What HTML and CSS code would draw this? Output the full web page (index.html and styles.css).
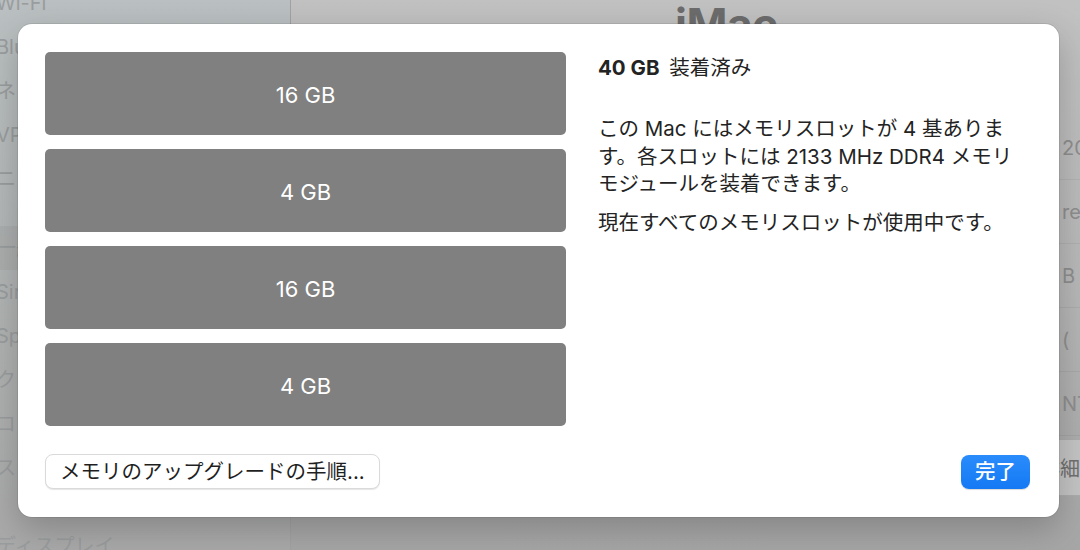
FILE: index.html
```html
<!DOCTYPE html>
<html lang="ja">
<head>
<meta charset="utf-8">
<title>メモリ</title>
<link rel="stylesheet" href="styles.css">
</head>
<body>
<div class="window">
  <aside class="sidebar">
    <ul class="side-list">
      <li>Wi-Fi</li>
      <li>Bluetooth</li>
      <li>ネットワーク</li>
      <li>VPN</li>
      <li>ニュース</li>
      <li class="section selected">一般</li>
      <li>Siri</li>
      <li>Spotlight</li>
      <li>クラウド</li>
      <li>コントロールセンター</li>
      <li>スクリーンセーバ</li>
      <li class="section last">ディスプレイ</li>
    </ul>
  </aside>
  <main class="content">
    <h1 class="model">iMac</h1>
    <div class="info-rows">
      <div class="info-row"><span class="val">2020</span></div>
      <div class="info-row"><span class="val">retina</span></div>
      <div class="info-row"><span class="val">B cx</span></div>
      <div class="info-row"><span class="val">(</span></div>
      <div class="info-row"><span class="val">NT</span></div>
      <div class="info-row btn-row"><span class="val ghost-btn">詳細...</span></div>
    </div>
  </main>
</div>

<div class="sheet">
  <div class="sheet-body">
    <div class="slots">
      <div class="slot">16 GB</div>
      <div class="slot">4 GB</div>
      <div class="slot">16 GB</div>
      <div class="slot">4 GB</div>
    </div>
    <div class="details">
      <h2 class="installed"><b>40 GB</b> <span class="installed-label">装着済み</span></h2>
      <p class="desc">この Mac にはメモリスロットが 4 基ありま<br>す。各スロットには 2133 MHz DDR4 メモリ<br>モジュールを装着できます。</p>
      <p class="desc second">現在すべてのメモリスロットが使用中です。</p>
    </div>
  </div>
  <div class="sheet-footer">
    <button class="btn">メモリのアップグレードの手順...</button>
    <button class="btn primary">完了</button>
  </div>
</div>
</body>
</html>
```

FILE: styles.css
```css
html, body {
  margin: 0;
  padding: 0;
  width: 1080px;
  height: 550px;
  overflow: hidden;
}

body {
  font-family: "Inter", "Noto Sans CJK JP", sans-serif;
  background: #b4b4b4;
  position: relative;
}

/* background (dimmed) window */
.window {
  display: flex;
  width: 1080px;
  height: 550px;
}

.sidebar {
  width: 291px;
  flex: none;
  background: linear-gradient(180deg, #bac0c1 0%, #b3b6b6 45%, #a9a9a9 100%);
  border-right: 1px solid #a2a2a2;
  box-sizing: border-box;
  overflow: hidden;
}

.side-list {
  list-style: none;
  margin: -19px 0 0 -4px;
  padding: 0;
}

.side-list li {
  height: 44px;
  line-height: 44px;
  font-size: 20px;
  color: #9a9d9e;
  white-space: nowrap;
  padding-left: 0;
}

.side-list li.section {
  margin-top: 25px;
}

.side-list li.last {
  margin-top: 34px;
}

.side-list li.selected {
  background: rgba(0, 0, 0, 0.04);
}

.content {
  flex: 1;
  background: linear-gradient(180deg, #c1c1c1 0%, #b8b8b8 50%, #a6a6a6 100%);
  overflow: hidden;
  position: relative;
}

.model {
  margin: 2px 0 0;
  padding: 0 0 0 384px;
  font-size: 44px;
  font-weight: 700;
  line-height: 44px;
  color: #6c6c6c;
  letter-spacing: -0.5px;
}

.info-rows {
  margin-top: 70px;
  display: flex;
  flex-direction: column;
}

.info-row {
  height: 63px;
  display: flex;
  align-items: center;
  border-bottom: 1px solid rgba(0, 0, 0, 0.05);
  font-size: 20px;
  color: #8e8e8e;
  white-space: nowrap;
}

.info-row .val {
  margin-left: 771px;
}

.info-row.btn-row {
  border-bottom: none;
}

.info-row .ghost-btn {
  margin-left: 736px;
  background: #c4c4c4;
  border: 1px solid #acacac;
  border-radius: 7px;
  padding: 13px 12px;
  color: #707070;
}

/* sheet */
.sheet {
  position: absolute;
  left: 18px;
  top: 24px;
  width: 1041px;
  height: 493px;
  box-sizing: border-box;
  background: #ffffff;
  border-radius: 14px;
  box-shadow: 0 0 0 1px rgba(0, 0, 0, 0.08), 0 12px 34px rgba(0, 0, 0, 0.22);
  padding: 28px 29px 28px 27px;
  display: flex;
  flex-direction: column;
  justify-content: space-between;
}

.sheet-body {
  display: flex;
  gap: 32px;
}

.slots {
  width: 521px;
  flex: none;
  display: flex;
  flex-direction: column;
  gap: 14px;
}

.slot {
  height: 83px;
  box-sizing: border-box;
  padding-top: 3px;
  background: #808080;
  border-radius: 5px;
  display: flex;
  align-items: center;
  justify-content: center;
  color: #ffffff;
  font-size: 22px;
}

.details {
  flex: 1;
  color: #232323;
}

.installed {
  margin: 0;
  font-size: 20.5px;
  line-height: 32px;
  font-weight: 400;
}

.installed b {
  font-weight: 700;
}

.installed-label {
  margin-left: 4px;
}

.desc {
  margin: 31px 0 0;
  font-size: 20.5px;
  line-height: 27.5px;
  white-space: nowrap;
}

.desc.second {
  margin-top: 11px;
}

.sheet-footer {
  display: flex;
  justify-content: space-between;
  align-items: center;
}

.btn {
  font-family: inherit;
  font-size: 20.5px;
  height: 35px;
  line-height: 33px;
  padding: 0 14px;
  border-radius: 8px;
  background: #ffffff;
  color: #1f1f1f;
  border: 1px solid #dadada;
  box-shadow: 0 1px 1px rgba(0, 0, 0, 0.1);
  margin: 0;
}

.btn.primary {
  width: 69px;
  padding: 0;
  height: 34px;
  color: #ffffff;
  font-weight: 500;
  border: none;
  background: linear-gradient(180deg, #2a8cfb 0%, #1479f4 100%);
  box-shadow: 0 1px 1px rgba(0, 0, 0, 0.15);
}
```
